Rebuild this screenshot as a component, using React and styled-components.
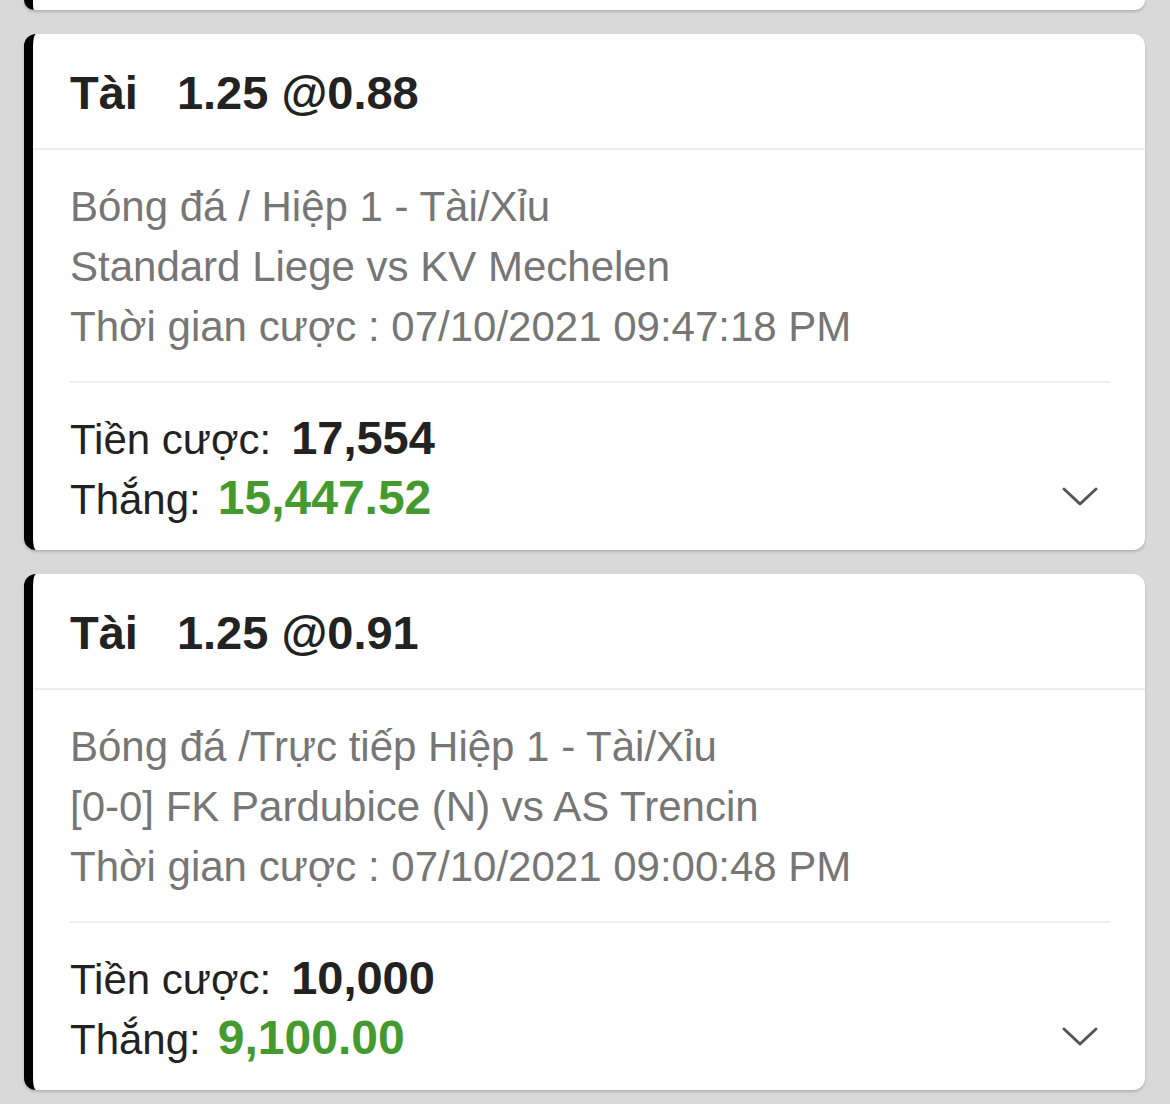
import React from "react";
import styled, { createGlobalStyle } from "styled-components";

const GlobalStyle = createGlobalStyle`
  html, body {
    margin: 0;
    padding: 0;
    background: #d9d9d9;
    font-family: "Liberation Sans", Arial, Helvetica, sans-serif;
    -webkit-font-smoothing: antialiased;
  }
`;

const Page = styled.div`
  width: 1170px;
  min-height: 1104px;
  padding: 0 25px 0 24px;
  box-sizing: border-box;
  display: flex;
  flex-direction: column;
  gap: 24px;
  background: #d9d9d9;
`;

const CardStub = styled.div`
  height: 10px;
  background: #fff;
  border-left: 9px solid #000;
  border-radius: 0 0 12px 12px;
  box-shadow: 0 2px 3px rgba(0, 0, 0, 0.18);
`;

const Card = styled.div`
  background: #fff;
  border-left: 9px solid #000;
  border-radius: 12px;
  box-shadow: 0 2px 3px rgba(0, 0, 0, 0.18);
  overflow: hidden;
`;

const Header = styled.div`
  height: 116px;
  display: flex;
  align-items: center;
  padding: 3px 0 0 37px;
  box-sizing: border-box;
  border-bottom: 2px solid #ededed;
  font-size: 47px;
  font-weight: 700;
  color: #222;
`;

const Side = styled.span`
  margin-right: 39px;
`;

const Body = styled.div`
  padding: 27px 35px 22px 37px;
`;

const InfoLine = styled.div`
  font-size: 42px;
  line-height: 60px;
  color: #767676;
  white-space: nowrap;
`;

const Divider = styled.div`
  height: 2px;
  background: #efefef;
  margin: 24px 0 25px;
`;

const Footer = styled.div`
  display: flex;
  justify-content: space-between;
  align-items: flex-end;
`;

const Amounts = styled.div``;

const AmountRow = styled.div`
  display: flex;
  align-items: baseline;
  height: 60px;
  line-height: 60px;
  font-size: 42px;
  color: #222;
`;

const Value = styled.span`
  margin-left: ${(props) => props.gap || "20px"};
  font-size: ${(props) => (props.win ? "48px" : "47px")};
  font-weight: 700;
  color: ${(props) => (props.win ? "#449a2e" : "#222")};
`;

const Chevron = styled.svg`
  width: 36px;
  height: 20px;
  margin: 0 12px 21px 0;
`;

const bets = [
  {
    side: "Tài",
    line: "1.25 @0.88",
    market: "Bóng đá / Hiệp 1 - Tài/Xỉu",
    match: "Standard Liege vs KV Mechelen",
    time: "Thời gian cược : 07/10/2021 09:47:18 PM",
    stake: "17,554",
    win: "15,447.52",
  },
  {
    side: "Tài",
    line: "1.25 @0.91",
    market: "Bóng đá /Trực tiếp Hiệp 1 - Tài/Xỉu",
    match: "[0-0] FK Pardubice (N) vs AS Trencin",
    time: "Thời gian cược : 07/10/2021 09:00:48 PM",
    stake: "10,000",
    win: "9,100.00",
  },
];

const BetCard = ({ bet }) => (
  <Card>
    <Header>
      <Side>{bet.side}</Side>
      <span>{bet.line}</span>
    </Header>
    <Body>
      <InfoLine>{bet.market}</InfoLine>
      <InfoLine>{bet.match}</InfoLine>
      <InfoLine>{bet.time}</InfoLine>
      <Divider />
      <Footer>
        <Amounts>
          <AmountRow>
            Tiền cược:<Value>{bet.stake}</Value>
          </AmountRow>
          <AmountRow>
            Thắng:<Value win gap="17px">{bet.win}</Value>
          </AmountRow>
        </Amounts>
        <Chevron viewBox="0 0 36 20">
          <polyline
            points="2,2 18,17 34,2"
            fill="none"
            stroke="#555"
            strokeWidth="3"
            strokeLinecap="round"
            strokeLinejoin="round"
          />
        </Chevron>
      </Footer>
    </Body>
  </Card>
);

const App = () => (
  <>
    <GlobalStyle />
    <Page>
      <CardStub />
      {bets.map((bet, i) => (
        <BetCard key={i} bet={bet} />
      ))}
    </Page>
  </>
);

export default App;
